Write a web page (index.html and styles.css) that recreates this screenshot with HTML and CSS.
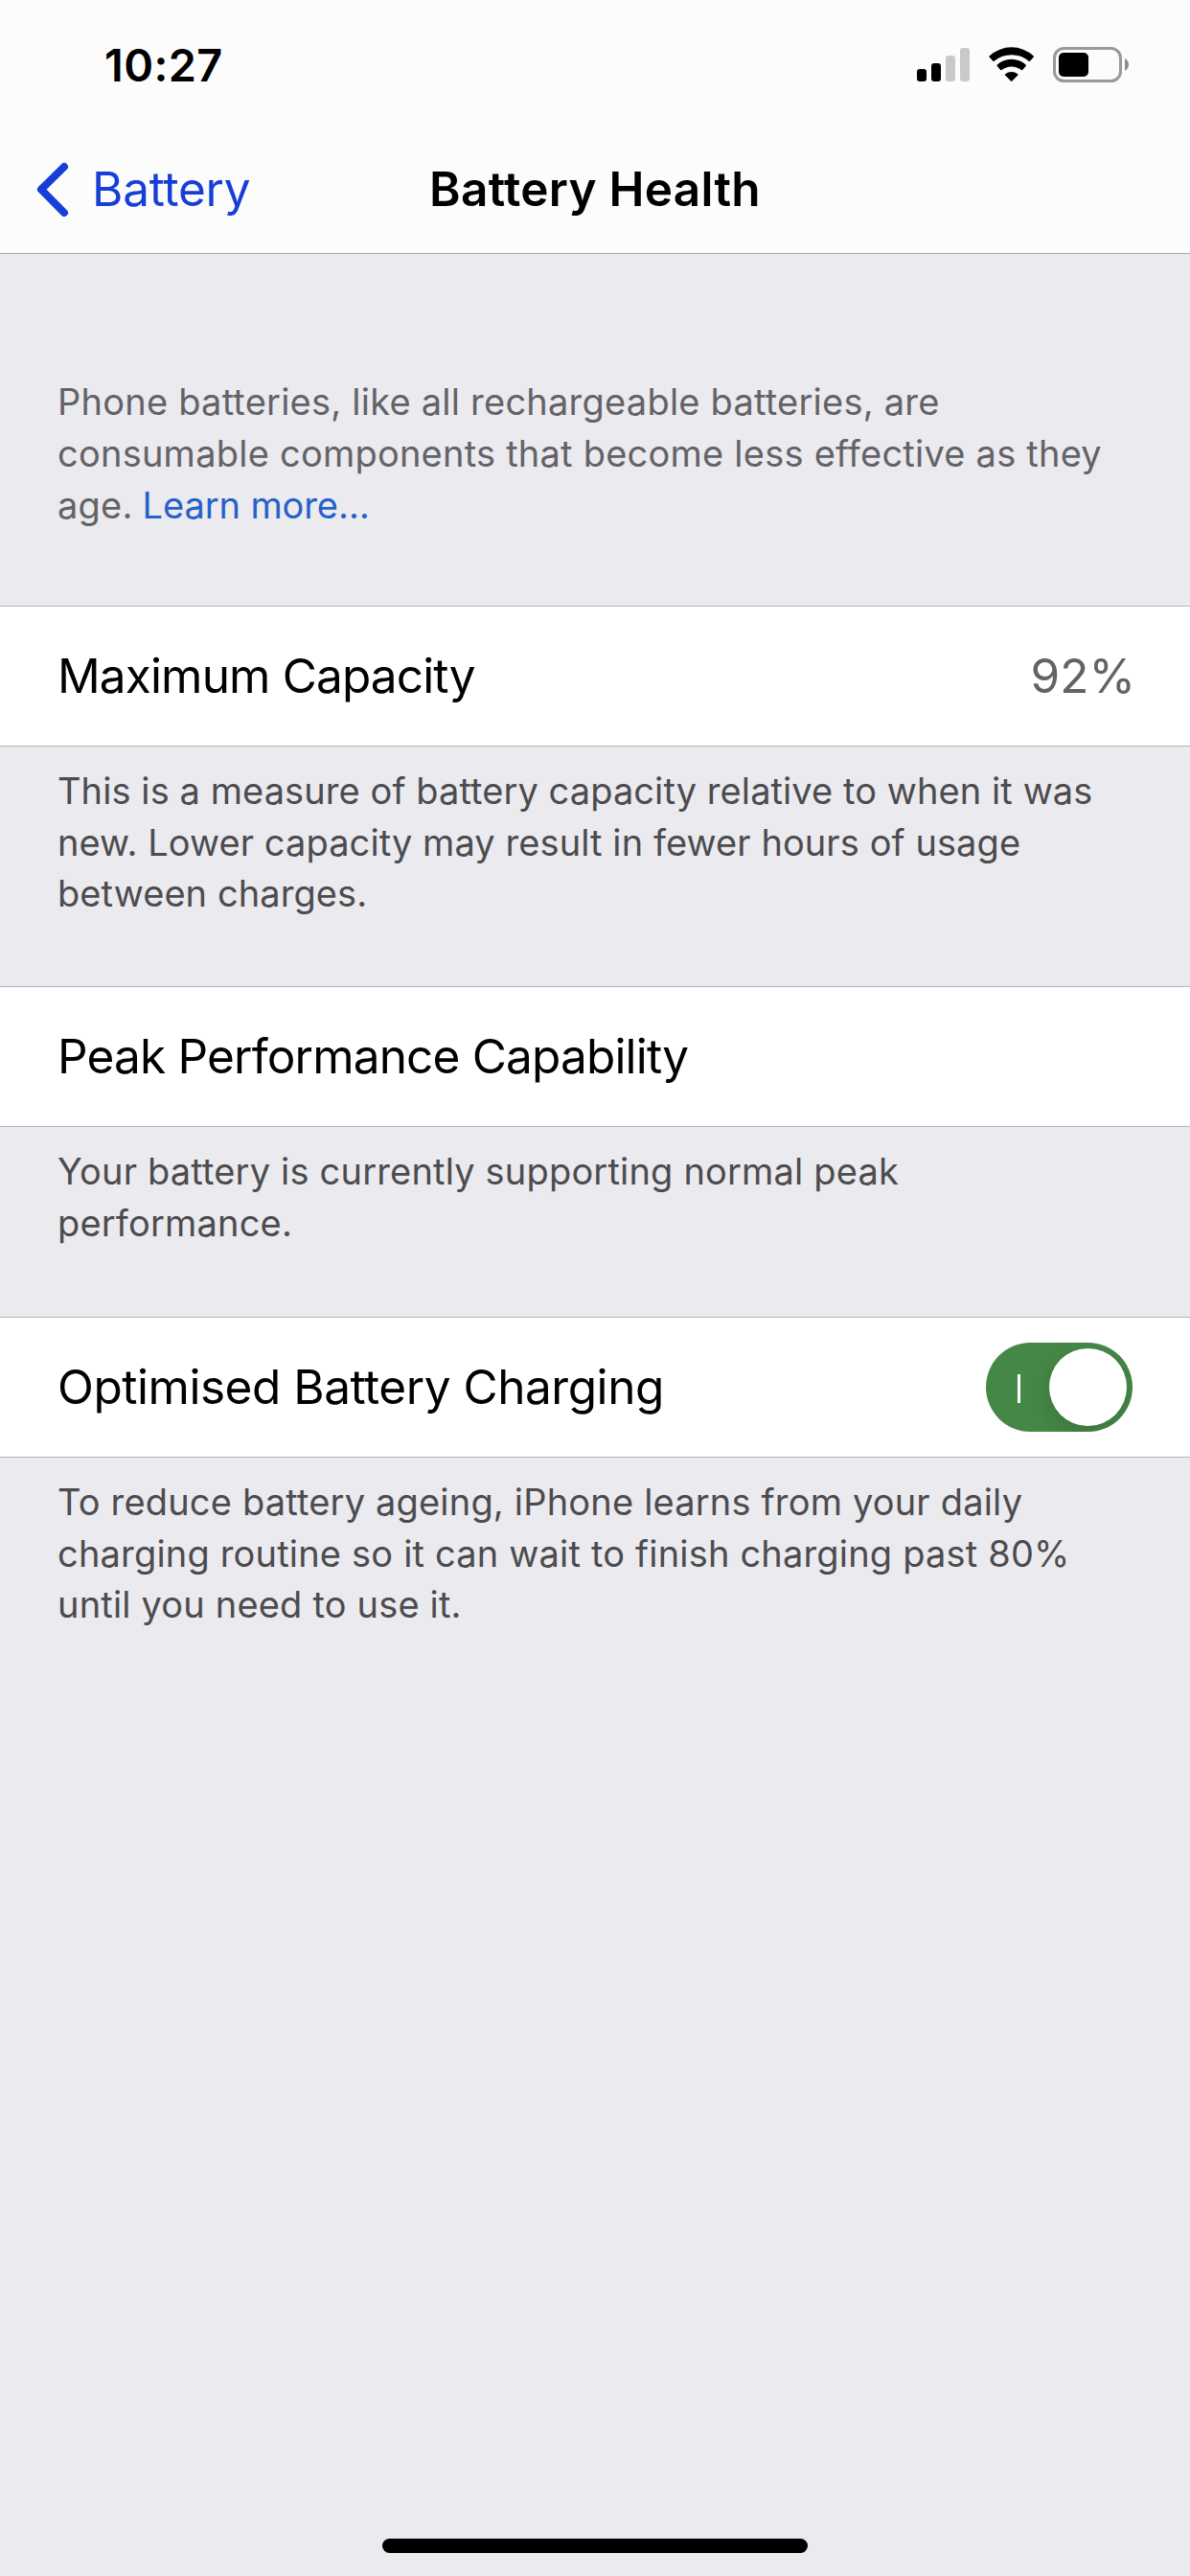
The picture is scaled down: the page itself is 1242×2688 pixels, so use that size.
FILE: index.html
```
<!DOCTYPE html>
<html lang="en">
<head>
    <meta charset="UTF-8">
    <meta name="viewport" content="width=device-width, initial-scale=1.0">
    <title>Battery Health</title>
    <link rel="stylesheet" href="styles.css">
</head>
<body>
    <div class="screen">
        <header class="header">
            <div class="status-bar">
                <span class="time">10:27</span>
                <div class="status-icons">
                    <svg class="signal" width="55" height="35" viewBox="0 0 55 35">
                        <rect x="0" y="22" width="10" height="13" rx="3" />
                        <rect x="15" y="16" width="10" height="19" rx="3" />
                        <rect class="off" x="30" y="8" width="10" height="27" rx="3" />
                        <rect class="off" x="45" y="0" width="10" height="35" rx="3" />
                    </svg>
                    <svg class="wifi" width="48" height="37" viewBox="0 0 48 37">
                        <path d="M.8 10.8Q-.2 10 .8 9.2A34 34 0 0 1 46.6 9.2Q47.6 10 46.6 10.8L43 14.7Q42.4 15.3 41.7 14.7A28.5 28.5 0 0 0 5.7 14.7Q5 15.3 4.4 14.7Z" />
                        <path d="M8.8 20Q8 19.3 8.8 18.6A22 22 0 0 1 38.6 18.6Q39.4 19.3 38.6 20L35.2 24Q34.6 24.6 33.9 24A16.5 16.5 0 0 0 13.5 24Q12.8 24.6 12.2 24Z" />
                        <path d="M17.1 29.5Q16.5 28.8 17.2 28.2A10.5 10.5 0 0 1 30.2 28.2Q30.9 28.8 30.3 29.5L24.4 35.6Q23.7 36.2 23 35.6Z" />
                    </svg>
                    <svg class="battery" width="80" height="37" viewBox="0 0 80 37">
                        <rect class="shell" x="1.5" y="1.5" width="69" height="34" rx="10" />
                        <rect x="6" y="6" width="31" height="25" rx="5" />
                        <path class="cap" d="M75 12C77.600 13.200 79 15.700 79 18.500S77.600 23.800 75 25Z" />
                    </svg>
                </div>
            </div>
            <nav class="nav-bar">
                <a class="back">
                    <svg class="chevron" width="34" height="58" viewBox="0 0 34 58">
                        <path d="M29 5L5 28.700L29 53" />
                    </svg>
                    <span class="back-text">Battery</span>
                </a>
                <h1 class="title">Battery Health</h1>
            </nav>
        </header>

        <main>
            <p class="intro">Phone batteries, like all rechargeable batteries, are<br>consumable components that become less effective as they<br>age. <a class="link">Learn more…</a></p>

            <div class="row">
                <span class="label capacity">Maximum Capacity</span>
                <span class="value">92%</span>
            </div>
            <p class="note">This is a measure of battery capacity relative to when it was<br>new. Lower capacity may result in fewer hours of usage<br>between charges.</p>

            <div class="row">
                <span class="label peak">Peak Performance Capability</span>
            </div>
            <p class="note note-short">Your battery is currently supporting normal peak<br>performance.</p>

            <div class="row">
                <span class="label charging">Optimised Battery Charging</span>
                <div class="toggle">
                    <span class="toggle-mark"></span>
                    <span class="toggle-knob"></span>
                </div>
            </div>
            <p class="note note-last">To reduce battery ageing, iPhone learns from your daily<br>charging routine so it can wait to finish charging past 80%<br>until you need to use it.</p>
        </main>

        <div class="home-indicator"></div>
    </div>
</body>
</html>
```

FILE: styles.css
```
* {
    box-sizing: border-box;
}
body {
    margin: 0;
    font-family: Inter, "Liberation Sans", sans-serif;
    background-color: #ebeaef;
    color: #000;
}
svg {
    display: block;
}
.screen {
    display: flex;
    flex-direction: column;
    width: 1242px;
    height: 2688px;
    overflow: hidden;
}
main {
    flex: 1;
}

/* header */
.header {
    height: 265px;
    background-color: #fcfcfc;
    border-bottom: 1px solid #a5a5a8;
}
.status-bar {
    display: flex;
    justify-content: space-between;
    height: 132px;
    padding: 49px 63px 0 109px;
}
.time {
    margin-top: -9px;
    font-size: 46.8px;
    font-weight: 600;
    line-height: 56px;
    letter-spacing: 0.4px;
}
.status-icons {
    display: flex;
    align-items: flex-start;
}
.signal {
    margin: 1px 20px 0 0;
}
.signal .off {
    fill: #c9c9c9;
}
.wifi {
    margin-right: 19px;
}
.battery .shell {
    fill: none;
    stroke: #999;
    stroke-width: 3;
}
.battery .cap {
    fill: #8c8c8c;
}
.nav-bar {
    display: grid;
    grid-template-columns: 1fr auto 1fr;
    align-items: center;
    height: 132px;
    padding: 0 38px;
}
.back {
    display: flex;
    align-items: center;
    gap: 24px;
    color: #173fd8;
    font-size: 49.5px;
    letter-spacing: -0.23px;
}
.back-text {
    padding-bottom: 2px;
}
.chevron path {
    fill: none;
    stroke: #173fd8;
    stroke-width: 8;
    stroke-linecap: round;
    stroke-linejoin: round;
}
.title {
    margin: 0;
    padding-bottom: 2px;
    font-size: 49.5px;
    font-weight: 600;
    letter-spacing: 0.28px;
}

/* rows */
.row {
    display: flex;
    align-items: center;
    justify-content: space-between;
    height: 147px;
    padding: 0 60px;
    background-color: #fff;
    border-top: 1px solid #b5b5b8;
    border-bottom: 1px solid #b5b5b8;
    font-size: 49.5px;
}
.label,
.value {
    padding-bottom: 2px;
}
.capacity {
    letter-spacing: -0.85px;
}
.peak {
    letter-spacing: -0.82px;
}
.charging {
    letter-spacing: -0.46px;
}
.value {
    margin-right: -3px;
    color: #636367;
}

/* text between the rows */
.intro,
.note {
    margin: 0;
    font-size: 38px;
    white-space: nowrap;
}
.intro {
    height: 367px;
    padding: 127px 60px 0;
    line-height: 54px;
    letter-spacing: 0.23px;
    color: #636367;
}
.link {
    margin-left: -1px;
    color: #2462c9;
    letter-spacing: -0.1px;
}
.note {
    height: 250px;
    padding: 20px 60px 0;
    line-height: 53.6px;
    letter-spacing: 0.08px;
    color: #4c4c4f;
}
.note-short {
    height: 198px;
    letter-spacing: 0.18px;
}
.note-last {
    letter-spacing: 0.18px;
}

/* switch */
.toggle {
    display: flex;
    align-items: center;
    justify-content: space-between;
    width: 153px;
    height: 93px;
    padding: 0 6px 0 33px;
    border-radius: 47px;
    background-color: #458846;
    overflow: hidden;
}
.toggle-mark {
    width: 3px;
    height: 30px;
    margin-top: 3px;
    background-color: #fff;
}
.toggle-knob {
    width: 81px;
    height: 81px;
    border-radius: 50%;
    background-color: #fff;
    box-shadow: 0 9px 24px rgba(0, 0, 0, 0.15);
}

.home-indicator {
    width: 444px;
    height: 15px;
    margin: 0 auto 24px;
    border-radius: 8px;
    background-color: #000;
}
```
